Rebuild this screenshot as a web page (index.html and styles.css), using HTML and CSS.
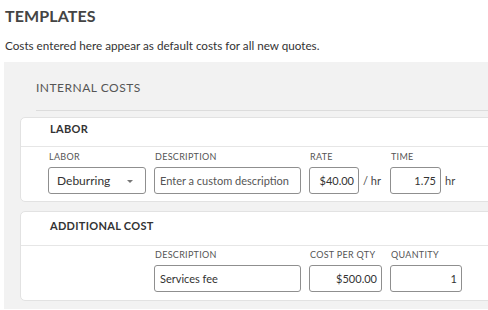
FILE: index.html
```html
<!DOCTYPE html>
<html>
<head>
<meta charset="utf-8">
<link rel="stylesheet" href="styles.css">
</head>
<body>
<div class="page">
  <h1 class="title">TEMPLATES</h1>
  <p class="subtitle">Costs entered here appear as default costs for all new quotes.</p>
  <section class="panel">
    <div class="panel-head">INTERNAL COSTS</div>
    <div class="card card-labor">
      <div class="card-head">LABOR</div>
      <div class="card-body">
        <div class="field">
          <div class="label">LABOR</div>
          <div class="control">
            <div class="box select">Deburring<span class="caret"></span></div>
          </div>
        </div>
        <div class="field">
          <div class="label">DESCRIPTION</div>
          <div class="control">
            <div class="box placeholder">Enter a custom description</div>
          </div>
        </div>
        <div class="field">
          <div class="label">RATE</div>
          <div class="control">
            <div class="box num w-rate">$40.00</div><span class="unit">/ hr</span>
          </div>
        </div>
        <div class="field">
          <div class="label">TIME</div>
          <div class="control">
            <div class="box num w-time">1.75</div><span class="unit">hr</span>
          </div>
        </div>
      </div>
    </div>
    <div class="card card-extra">
      <div class="card-head">ADDITIONAL COST</div>
      <div class="card-body">
        <div class="field col-2">
          <div class="label">DESCRIPTION</div>
          <div class="control">
            <div class="box">Services fee</div>
          </div>
        </div>
        <div class="field">
          <div class="label">COST PER QTY</div>
          <div class="control">
            <div class="box num">$500.00</div>
          </div>
        </div>
        <div class="field">
          <div class="label">QUANTITY</div>
          <div class="control">
            <div class="box num">1</div>
          </div>
        </div>
      </div>
    </div>
  </section>
</div>
</body>
</html>
```
FILE: styles.css
```css
html, body {
  margin: 0;
  padding: 0;
  overflow: hidden;
  background: #ffffff;
}
body {
  font-family: "Lato", "Open Sans", "Liberation Sans", sans-serif;
  color: #333;
}
.page {
  width: 560px;
  padding: 6px 0 0 5px;
}
.title {
  margin: 0;
  font-size: 16px;
  line-height: 20px;
  font-weight: 700;
  color: #444;
  letter-spacing: 0.1px;
}
.subtitle {
  margin: 12px 0 0 0;
  font-size: 11.7px;
  line-height: 14px;
  color: #333;
}
.panel {
  margin: 10px 0 0 -1px;
  background: #f2f2f2;
  padding: 0 0 8px 16px;
}
.panel-head {
  margin-left: 16px;
  padding: 19px 0 15px 0;
  font-size: 12px;
  line-height: 14px;
  color: #555;
  letter-spacing: 0.5px;
  border-bottom: 1px solid #dcdcdc;
}
.card {
  background: #fff;
  border: 1px solid #e2e2e2;
  border-radius: 5px;
}
.card-labor { margin-top: 6px; }
.card-extra { margin-top: 9px; }
.card-head {
  padding-left: 29px;
  font-size: 11px;
  line-height: 14px;
  font-weight: 700;
  color: #333;
  border-bottom: 1px solid #e6e6e6;
  letter-spacing: 0.3px;
}
.card-labor .card-head { padding-top: 4px; padding-bottom: 10px; }
.card-extra .card-head { padding-top: 7px; padding-bottom: 12px; }
.card-body {
  display: grid;
  grid-template-columns: 98px 147px 73px 72px;
  column-gap: 8px;
  padding-left: 27px;
}
.card-labor .card-body { padding-top: 5px; padding-bottom: 7px; }
.card-extra .card-body { padding-top: 4px; padding-bottom: 8px; }
.col-2 { grid-column-start: 2; }
.label {
  font-size: 9px;
  line-height: 10px;
  color: #555;
  padding-left: 1px;
  letter-spacing: 0.3px;
}
.control {
  display: flex;
  align-items: center;
  margin-top: 5px;
}
.box {
  box-sizing: border-box;
  flex: 1;
  height: 27px;
  border: 1px solid #8f8f8f;
  border-radius: 3px;
  padding: 0 5px;
  font-size: 11px;
  line-height: 25px;
  color: #333;
  white-space: nowrap;
  overflow: hidden;
}
.select {
  position: relative;
  padding-left: 8px;
  font-size: 12px;
}
.caret {
  position: absolute;
  right: 12px;
  top: 12px;
  width: 0;
  height: 0;
  border-left: 3px solid transparent;
  border-right: 3px solid transparent;
  border-top: 3px solid #777;
}
.placeholder { color: #555; }
.num { text-align: right; padding-right: 4px; }
.w-rate { flex: 0 0 50px; }
.w-time { flex: 0 0 51px; }
.unit {
  margin-left: 4px;
  font-size: 11px;
  color: #444;
}
```
